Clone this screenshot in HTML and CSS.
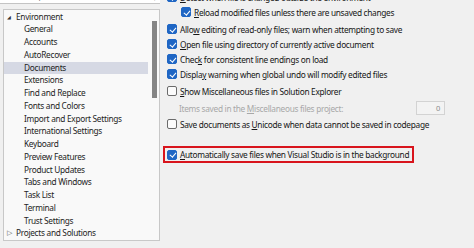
FILE: index.html
```html
<!DOCTYPE html>
<html>
<head>
    <title>Options - Documents</title>
    <link rel="stylesheet" href="styles.css">
</head>
<body>
<div class="page">
    <div class="left">
        <div class="search">
            <span class="search-text">Search Options (Ctrl+E)</span>
            <span class="search-icon">&#x1F50D;&#xFE0E;</span>
        </div>
        <div class="tree">
            <div class="tree-list">
                <div class="node"><span class="tri open">&#9698;</span>Environment</div>
                <div class="node child">General</div>
                <div class="node child">Accounts</div>
                <div class="node child">AutoRecover</div>
                <div class="node child selected">Documents</div>
                <div class="node child">Extensions</div>
                <div class="node child">Find and Replace</div>
                <div class="node child">Fonts and Colors</div>
                <div class="node child">Import and Export Settings</div>
                <div class="node child">International Settings</div>
                <div class="node child">Keyboard</div>
                <div class="node child">Preview Features</div>
                <div class="node child">Product Updates</div>
                <div class="node child">Tabs and Windows</div>
                <div class="node child">Task List</div>
                <div class="node child">Terminal</div>
                <div class="node child">Trust Settings</div>
                <div class="node"><span class="tri closed">&#9655;</span>Projects and Solutions</div>
            </div>
            <div class="scroll"><div class="thumb"></div></div>
        </div>
    </div>

    <div class="right">
        <div class="opt first"><span class="cb on"></span><span><u>D</u>etect when file is changed outside the environment</span></div>
        <div class="opt nested"><span class="cb on"></span><span><u>R</u>eload modified files unless there are unsaved changes</span></div>
        <div class="opt gap2"><span class="cb on"></span><span>Allo<u>w</u> editing of read-only files; warn when attempting to save</span></div>
        <div class="opt"><span class="cb on"></span><span><u>O</u>pen file using directory of currently active document</span></div>
        <div class="opt"><span class="cb on"></span><span>Chec<u>k</u> for consistent line endings on load</span></div>
        <div class="opt"><span class="cb on"></span><span>Displa<u>y</u> warning when global undo will modify edited files</span></div>
        <div class="opt gap2"><span class="cb"></span><span><u>S</u>how Miscellaneous files in Solution Explorer</span></div>
        <div class="opt items gap2">
            <span class="disabled">Items saved in the <u>M</u>iscellaneous files project:</span>
            <span class="num">0</span>
        </div>
        <div class="opt gap1"><span class="cb"></span><span>Save documents as <u>U</u>nicode when data cannot be saved in codepage</span></div>
        <div class="highlight">
            <div class="opt"><span class="cb on"></span><span><u>A</u>utomatically save files when Visual Studio is in the background</span></div>
        </div>
    </div>
</div>
</body>
</html>
```

FILE: styles.css
```css
body { margin: 0; background: #f0f0f0; color: #161616; font-family: "Noto Sans", "Open Sans", sans-serif; font-size: 8.3px; letter-spacing: -0.3px; overflow: hidden; }
.page { display: flex; height: 248px; }

/* left column: search + tree */
.left { width: 160px; flex: none; }
.search { margin-top: -12px; height: 15px; background: #fff; border-bottom: 1px solid #c4c4c4; display: flex; justify-content: space-between; align-items: center; padding: 0 4px 0 6px; color: #777; }
.search-icon { font-size: 8px; color: #444; }
.tree { margin: 5px 0 0 3px; height: 230px; border: 1px solid #c8c8c8; background: #f9f9f9; display: flex; }
.tree-list { flex: 1; padding-top: 0.5px; }
.node { height: 12.75px; line-height: 12.75px; padding-left: 12px; white-space: nowrap; color: #1e1e1e; }
.node.child { padding-left: 20px; }
.node.selected { background: #d6d9e4; }
.tri { display: inline-block; width: 9px; margin-left: -9px; font-size: 5px; color: #333; vertical-align: top; letter-spacing: 0; }
.tri.closed { font-size: 7px; color: #555; }
.scroll { width: 11px; flex: none; }
.thumb { width: 5px; height: 77px; margin: 11px 0 0 4px; background: #858585; }

/* right column: options */
.right { flex: 1; padding-left: 7px; }
.opt { height: 15px; display: flex; align-items: center; white-space: nowrap; }
.opt.first { margin-top: -10.5px; }
.opt.nested { padding-left: 14px; }
.opt.gap2 { margin-top: 2px; }
.opt.gap1 { margin-top: 1px; }
.cb { width: 10px; height: 10px; flex: none; margin-right: 3px; border: 1px solid #6b6b6b; border-radius: 2px; background: #fbfbfb; box-sizing: border-box; position: relative; }
.cb.on { background: #1f66c4; border-color: #1f66c4; }
.cb.on::after { content: ""; position: absolute; left: 2.5px; top: 0.5px; width: 2.5px; height: 5px; border: solid #fff; border-width: 0 1.3px 1.3px 0; transform: rotate(40deg); }
u { text-decoration-thickness: 1px; text-underline-offset: 1px; }
.items { padding-left: 12px; justify-content: space-between; width: 266px; }
.disabled { color: #a8a8a8; }
.num { width: 29px; height: 14px; box-sizing: border-box; border: 1px solid #d3d3d3; background: #f3f3f3; color: #8a8a8a; text-align: right; padding-right: 4px; line-height: 12px; font-size: 7.5px; }
.highlight { margin: 14.5px 0 0 -4px; width: 245px; border: 2px solid #d8141c; padding-left: 2px; }
.highlight .opt { height: 13px; }
```
